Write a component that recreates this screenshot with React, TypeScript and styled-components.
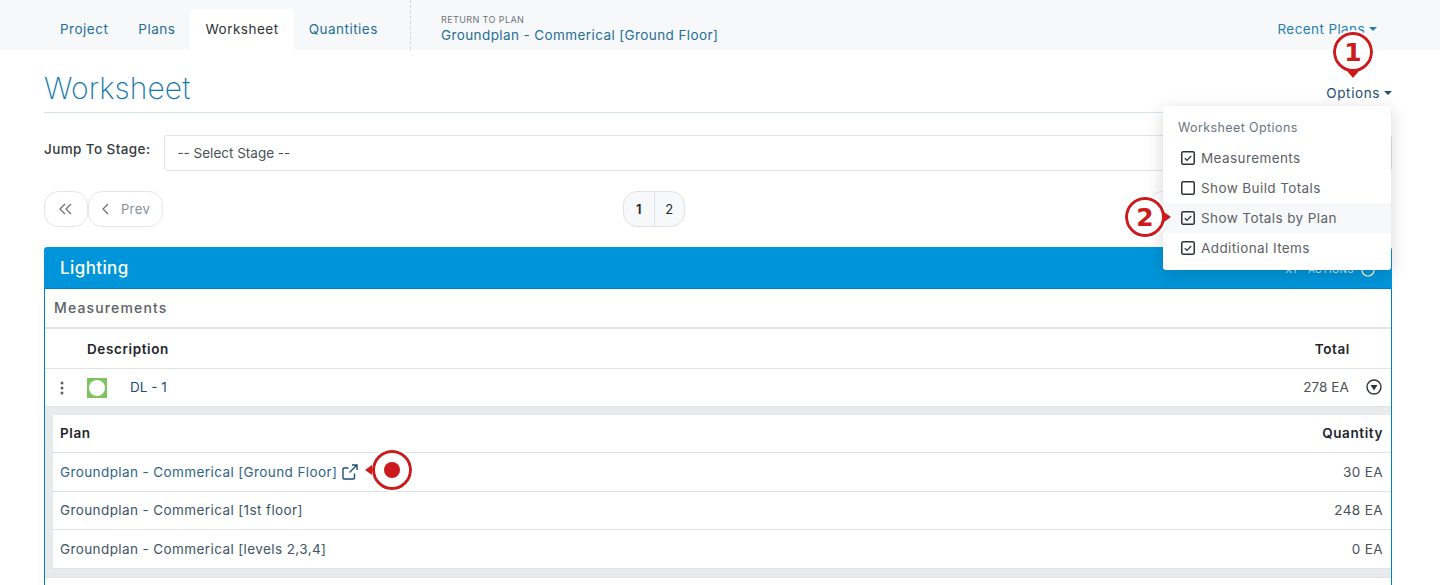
import * as React from 'react';
import styled, { createGlobalStyle } from 'styled-components';

const GlobalStyle = createGlobalStyle`
    html, body {
        margin: 0;
        background: #fff;
        font-family: "Inter", "Liberation Sans", sans-serif;
        letter-spacing: 0.4px;
        overflow: hidden;
    }
    * {
        box-sizing: border-box;
    }
`

const Page = styled.div`
    position: relative;
    width: 1440px;
    height: 585px;
    overflow: hidden;
`

const TopBar = styled.div`
    height: 50px;
    background-color: #f7f8fa;
    display: flex;
    align-items: flex-end;
    padding: 0 63px 0 45px;
`

const Tabs = styled.div`
    display: flex;
    height: 41px;
    width: 365px;
`

const Tab = styled.div<{ $active?: boolean }>`
    height: 41px;
    padding: 12px 15px 0;
    font-size: 13.5px;
    line-height: 17px;
    letter-spacing: 0.5px;
    border-radius: 4px 4px 0 0;
    background-color: ${props => props.$active ? '#fff' : 'transparent'};
    color: ${props => props.$active ? '#2d3338' : '#1f6f96'};
`

const ReturnBlock = styled.div`
    height: 50px;
    border-left: 1px dashed #d5d8db;
    padding: 14px 0 0 30px;
    flex: 1;
`

const ReturnLabel = styled.div`
    font-size: 9px;
    line-height: 12px;
    color: #6c757d;
`

const ReturnLink = styled.div`
    font-size: 13.5px;
    line-height: 18px;
    color: #1f6f96;
`

const Recent = styled.div`
    align-self: center;
    margin-top: 8px;
    font-size: 13.5px;
    color: #1f7fb0;
    display: flex;
    align-items: center;
    gap: 4px;
`

const Caret = styled.span<{ $color: string }>`
    width: 0;
    height: 0;
    border-left: 4px solid transparent;
    border-right: 4px solid transparent;
    border-top: 4px solid ${props => props.$color};
`

const Content = styled.div`
    padding: 0 48px 0 44px;
`

const TitleRow = styled.div`
    height: 63px;
    border-bottom: 1px solid #d3e4ee;
    display: flex;
    align-items: flex-end;
    justify-content: space-between;
    padding-bottom: 4px;
`

const Title = styled.h1`
    margin: 0;
    font-size: 30px;
    font-weight: 200;
    letter-spacing: 0.1px;
    line-height: 40px;
    color: #1678ab;
`

const OptionsToggle = styled.div`
    margin-bottom: 7px;
    font-size: 13.5px;
    letter-spacing: 0.6px;
    color: #1d4f73;
    display: flex;
    align-items: center;
    gap: 4px;
`

const StageRow = styled.div`
    display: flex;
    margin-top: 22px;
    gap: 14px;
`

const StageLabel = styled.div`
    font-size: 13.5px;
    font-weight: 500;
    line-height: 28px;
    color: #343a40;
`

const StageSelect = styled.div`
    flex: 1;
    height: 36px;
    border: 1px solid #dfe2e6;
    border-radius: 3px;
    padding: 0 12px;
    font-size: 13.5px;
    letter-spacing: 0;
    line-height: 35px;
    color: #495057;
`

const Pager = styled.div`
    display: grid;
    grid-template-columns: 579px auto 1fr;
    margin-top: 20px;
    height: 36px;
`

const PagerSide = styled.div`
    display: flex;
`

const PagerEnd = styled(PagerSide)`
    padding-left: 463px;
`

const PagerButton = styled.div<{ $wide?: boolean }>`
    width: ${props => props.$wide ? '75px' : '44px'};
    height: 36px;
    border: 1px solid #e4e6e9;
    border-radius: 14px;
    display: flex;
    align-items: center;
    justify-content: center;
    gap: 10px;
    font-size: 13px;
    color: #868e96;
`

const PageGroup = styled.div`
    display: flex;
    height: 36px;
    border: 1px solid #dfe2e6;
    border-radius: 14px;
    background-color: #f7f8fa;
    overflow: hidden;
`

const PageNumber = styled.div<{ $current?: boolean }>`
    width: 30px;
    line-height: 34px;
    text-align: center;
    font-size: 13px;
    font-weight: ${props => props.$current ? 600 : 400};
    color: #212529;
    & + & {
        border-left: 1px solid #dfe2e6;
    }
`

const Card = styled.div`
    margin-top: 20px;
    border: 1px solid #0082c0;
    border-top: 0;
    border-radius: 4px 4px 0 0;
`

const CardHeader = styled.div`
    height: 42px;
    margin: 0 -1px;
    padding: 0 17px 0 16px;
    display: flex;
    align-items: center;
    justify-content: space-between;
    background-color: #0095da;
    border-bottom: 1px solid #0082c0;
    border-radius: 4px 4px 0 0;
`

const CardTitle = styled.div`
    font-size: 17px;
    font-weight: 500;
    color: #fff;
`

const HeaderActions = styled.div`
    padding-top: 4px;
    font-size: 9.5px;
    letter-spacing: 0.5px;
    white-space: pre;
    color: #cfe9f7;
    display: flex;
    align-items: center;
    gap: 7px;
`

const SectionRow = styled.div`
    height: 40px;
    padding: 0 9px;
    border-bottom: 2px solid #dfe2e6;
    font-size: 14px;
    font-weight: 500;
    letter-spacing: 1.15px;
    line-height: 38px;
    color: #5c6166;
`

const TableRow = styled.div<{ $height: number }>`
    height: ${props => props.$height}px;
    display: flex;
    align-items: center;
    border-bottom: 1px solid #dfe2e6;
    font-size: 13.5px;
`

const HeadCell = styled.div`
    font-weight: 600;
    letter-spacing: 0.6px;
    color: #212529;
`

const DescriptionHead = styled(HeadCell)`
    margin-left: 42px;
`

const TotalHead = styled(HeadCell)`
    margin-left: auto;
    margin-right: 41px;
`

const DotHandle = styled.div`
    width: 42px;
    padding-left: 15px;
    display: flex;
`

const Swatch = styled.div`
    width: 20px;
    height: 20px;
    background-color: #7ec35e;
    padding: 2px;
    margin-right: 23px;
`

const SwatchDot = styled.div`
    width: 16px;
    height: 16px;
    border-radius: 50%;
    background-color: #fff;
`

const ItemLink = styled.div`
    margin-bottom: 2px;
    letter-spacing: 0;
    color: #1d4f73;
`

const TotalCell = styled.div`
    margin: 0 0 2px auto;
    letter-spacing: 0.1px;
    color: #495057;
`

const ToggleIcon = styled.svg`
    margin: 0 9px 2px 17px;
`

const Band = styled.div`
    background-color: #e9eaeb;
    padding: 8px 0 8px 8px;
`

const SubTable = styled.div`
    background-color: #fff;
`

const SubRow = styled.div<{ $height: number }>`
    height: ${props => props.$height}px;
    padding: 0 8px 1px 7px;
    display: flex;
    align-items: center;
    justify-content: space-between;
    border-bottom: 1px solid #dfe2e6;
    font-size: 13.5px;
    color: #495057;
`

const PlanCell = styled.div<{ $link?: boolean }>`
    display: flex;
    align-items: center;
    gap: 5px;
    color: ${props => props.$link ? '#2e6587' : '#3d5566'};
`

const CardFiller = styled.div`
    height: 40px;
    border-top: 1px solid #dfe2e6;
`

const Menu = styled.div`
    position: absolute;
    left: 1163px;
    top: 106px;
    width: 228px;
    height: 164px;
    padding-top: 7px;
    background-color: #fff;
    border-radius: 3px;
    box-shadow: 0 4px 18px rgba(0, 0, 0, 0.16);
`

const MenuTitle = styled.div`
    padding-left: 15px;
    font-size: 12.5px;
    line-height: 30px;
    color: #6c757d;
`

const MenuItem = styled.div<{ $hover?: boolean }>`
    height: 30px;
    padding-left: 18px;
    display: flex;
    align-items: center;
    gap: 6px;
    font-size: 13.5px;
    color: #5c6166;
    background-color: ${props => props.$hover ? '#f7f8fa' : 'transparent'};
`

const Callout = styled.div<{ $x: number; $y: number }>`
    position: absolute;
    left: ${props => props.$x}px;
    top: ${props => props.$y}px;
    width: 40px;
    height: 40px;
    border: 3px solid #cc1a1d;
    border-radius: 50%;
    background-color: #fff;
    outline: 2px solid rgba(255, 255, 255, 0.9);
    display: flex;
    align-items: center;
    justify-content: center;
    font-family: "DejaVu Sans", sans-serif;
    font-size: 25px;
    font-weight: 700;
    letter-spacing: 0;
    color: #cc1a1d;
`

const Pointer = styled.span<{ $dir: 'down' | 'right' | 'left' }>`
    position: absolute;
    width: 0;
    height: 0;
    ${props => props.$dir === 'down' && `
        left: 11px;
        bottom: -9px;
        border-left: 6px solid transparent;
        border-right: 6px solid transparent;
        border-top: 7px solid #cc1a1d;
    `}
    ${props => props.$dir === 'right' && `
        right: -9px;
        top: 12px;
        border-top: 5px solid transparent;
        border-bottom: 5px solid transparent;
        border-left: 7px solid #cc1a1d;
    `}
    ${props => props.$dir === 'left' && `
        left: -10px;
        top: 12px;
        border-top: 5px solid transparent;
        border-bottom: 5px solid transparent;
        border-right: 7px solid #cc1a1d;
    `}
`

const RedDot = styled.span`
    width: 16px;
    height: 16px;
    border-radius: 50%;
    background-color: #cc1a1d;
`

const Check = ({ checked }: { checked: boolean }) => (
    <svg width="14" height="14" viewBox="0 0 14 14" fill="none">
        <rect x="0.75" y="0.75" width="12.5" height="12.5" rx="1.5" stroke="#2d3338" strokeWidth="1.5" />
        {checked && <path d="M3.8 7.2l2.2 2.2 4.2-4.4" stroke="#2d3338" strokeWidth="1.3" />}
    </svg>
)

const Chevron = ({ double }: { double?: boolean }) => (
    <svg width={double ? 16 : 10} height="12" viewBox={double ? '0 0 16 12' : '0 0 10 12'} fill="none" stroke="#6c757d" strokeWidth="1.3">
        <path d="M7 1L2 6l5 5" />
        {double && <path d="M13 1L8 6l5 5" />}
    </svg>
)

const options = [
    { label: 'Measurements', checked: true },
    { label: 'Show Build Totals', checked: false },
    { label: 'Show Totals by Plan', checked: true, hover: true },
    { label: 'Additional Items', checked: true },
]

const plans = [
    { name: 'Groundplan - Commerical [Ground Floor]', qty: '30 EA', height: 39, external: true },
    { name: 'Groundplan - Commerical [1st floor]', qty: '248 EA', height: 38 },
    { name: 'Groundplan - Commerical [levels 2,3,4]', qty: '0 EA', height: 39 },
]

export default function App() {
    return (
        <Page>
            <GlobalStyle />
            <TopBar>
                <Tabs>
                    <Tab>Project</Tab>
                    <Tab>Plans</Tab>
                    <Tab $active>Worksheet</Tab>
                    <Tab>Quantities</Tab>
                </Tabs>
                <ReturnBlock>
                    <ReturnLabel>RETURN TO PLAN</ReturnLabel>
                    <ReturnLink>Groundplan - Commerical [Ground Floor]</ReturnLink>
                </ReturnBlock>
                <Recent>Recent Plans <Caret $color="#1f7fb0" /></Recent>
            </TopBar>
            <Content>
                <TitleRow>
                    <Title>Worksheet</Title>
                    <OptionsToggle>Options <Caret $color="#1d4f73" /></OptionsToggle>
                </TitleRow>
                <StageRow>
                    <StageLabel>Jump To Stage:</StageLabel>
                    <StageSelect>-- Select Stage --</StageSelect>
                </StageRow>
                <Pager>
                    <PagerSide>
                        <PagerButton><Chevron double /></PagerButton>
                        <PagerButton $wide><Chevron /> Prev</PagerButton>
                    </PagerSide>
                    <PageGroup>
                        <PageNumber $current>1</PageNumber>
                        <PageNumber>2</PageNumber>
                    </PageGroup>
                    <PagerEnd>
                        {/* sits behind the options menu, only its left edge shows */}
                        <PagerButton $wide />
                    </PagerEnd>
                </Pager>
                <Card>
                    <CardHeader>
                        <CardTitle>Lighting</CardTitle>
                        <HeaderActions>
                            XT   ACTIONS
                            <svg width="14" height="14" viewBox="0 0 14 14" fill="none" stroke="#fff" strokeWidth="1.2">
                                <circle cx="7" cy="7" r="6" />
                            </svg>
                        </HeaderActions>
                    </CardHeader>
                    <SectionRow>Measurements</SectionRow>
                    <TableRow $height={40}>
                        <DescriptionHead>Description</DescriptionHead>
                        <TotalHead>Total</TotalHead>
                    </TableRow>
                    <TableRow $height={38}>
                        <DotHandle>
                            <svg width="4" height="14" viewBox="0 0 4 14" fill="#5c6166">
                                <circle cx="2" cy="2" r="1.5" />
                                <circle cx="2" cy="7" r="1.5" />
                                <circle cx="2" cy="12" r="1.5" />
                            </svg>
                        </DotHandle>
                        <Swatch><SwatchDot /></Swatch>
                        <ItemLink>DL - 1</ItemLink>
                        <TotalCell>278 EA</TotalCell>
                        <ToggleIcon width="16" height="16" viewBox="0 0 16 16">
                            <circle cx="8" cy="8" r="7" fill="none" stroke="#2d3338" strokeWidth="1.4" />
                            <path d="M4.5 6l7 0L8 11.500z" fill="#2d3338" />
                        </ToggleIcon>
                    </TableRow>
                    <Band>
                        <SubTable>
                            <SubRow $height={38}>
                                <HeadCell>Plan</HeadCell>
                                <HeadCell>Quantity</HeadCell>
                            </SubRow>
                            {plans.map(plan => (
                                <SubRow key={plan.name} $height={plan.height}>
                                    <PlanCell $link={plan.external}>
                                        {plan.name}
                                        {plan.external && (
                                            <svg width="16" height="16" viewBox="0 0 16 16" fill="none" stroke="#1d4f73" strokeWidth="1.4">
                                                <path d="M12.500 9.500v4.500a1 1 0 0 1-1 1H2a1 1 0 0 1-1-1V5a1 1 0 0 1 1-1h4.500" />
                                                <path d="M10 1h5v5M15 1L7.500 8.500" />
                                            </svg>
                                        )}
                                    </PlanCell>
                                    {plan.qty}
                                </SubRow>
                            ))}
                        </SubTable>
                    </Band>
                    <CardFiller />
                </Card>
            </Content>
            <Menu>
                <MenuTitle>Worksheet Options</MenuTitle>
                {options.map(option => (
                    <MenuItem key={option.label} $hover={option.hover}>
                        <Check checked={option.checked} />
                        {option.label}
                    </MenuItem>
                ))}
            </Menu>
            <Callout $x={1333} $y={32}>1<Pointer $dir="down" /></Callout>
            <Callout $x={1125} $y={197}>2<Pointer $dir="right" /></Callout>
            <Callout $x={372} $y={450}><RedDot /><Pointer $dir="left" /></Callout>
        </Page>
    );
}
